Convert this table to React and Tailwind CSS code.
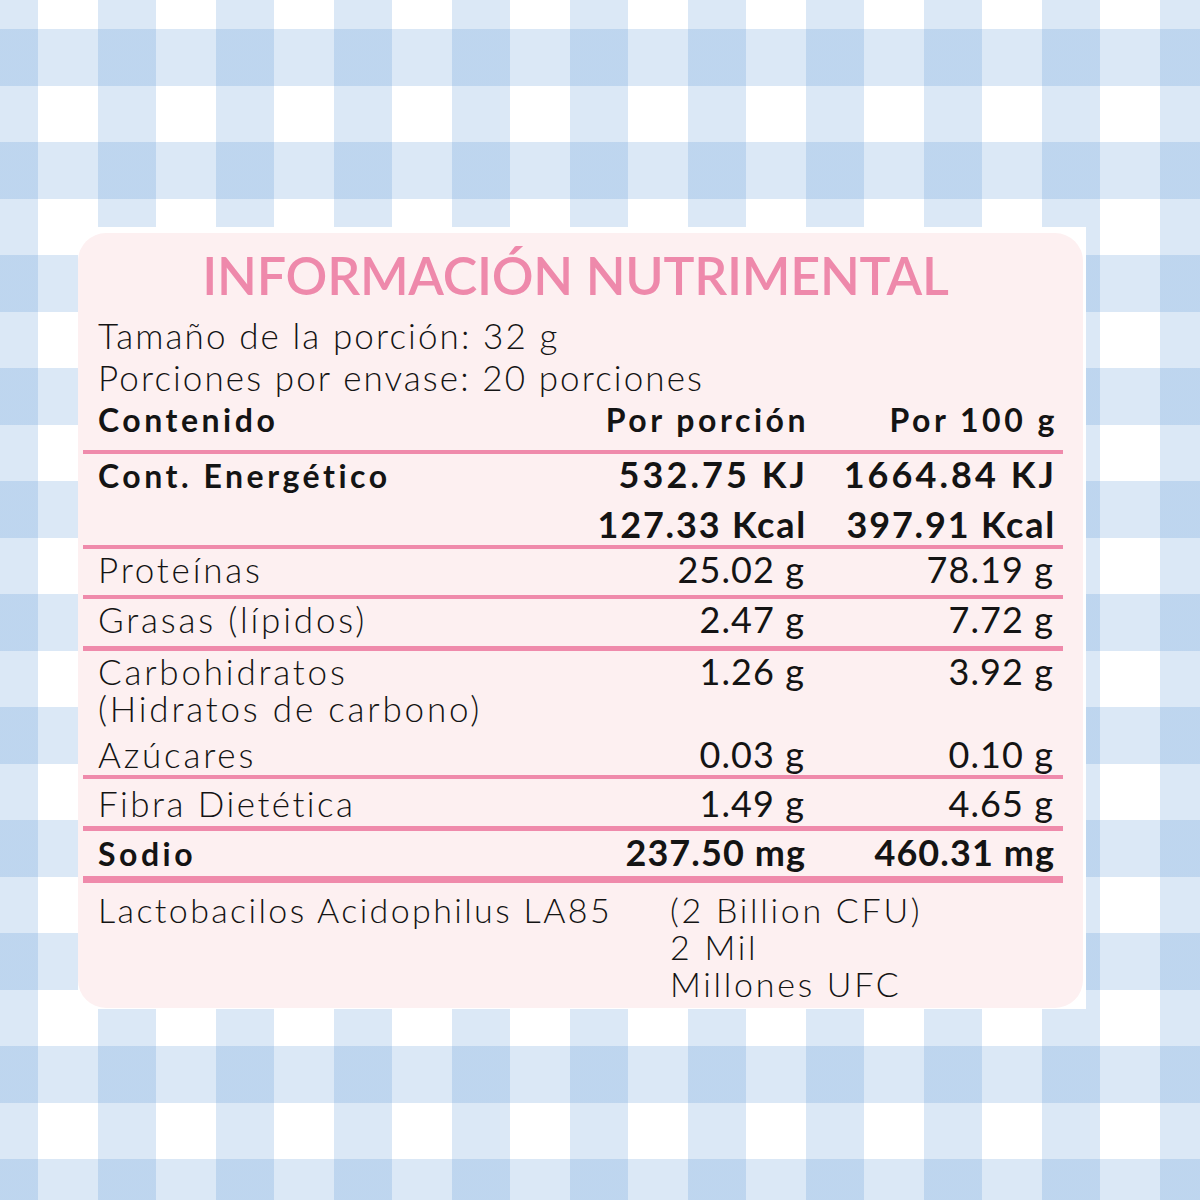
const pink = "bg-[#ef8aab]";

const rows = [
  { label: "Proteínas", a: "25.02 g", b: "78.19 g", h: "h-[46px]" },
  { label: "Grasas (lípidos)", a: "2.47 g", b: "7.72 g", h: "h-[47px]" },
];

const Line = ({ h = "h-[4px]" }) => <div className={`${h} ${pink}`} />;

const Values = ({ a, b, bold, track = "tracking-[0.03em]" }) => (
  <>
    <div className={`w-[240px] text-right text-[36px] ${track} ${bold ? "font-bold" : "font-normal"}`}>{a}</div>
    <div className={`w-[249px] text-right text-[36px] ${track} ${bold ? "font-bold" : "font-normal"}`}>{b}</div>
  </>
);

export default function App() {
  return (
    <div className="h-[1200px] w-[1200px] overflow-hidden bg-white bg-[image:repeating-linear-gradient(90deg,rgba(75,140,210,0.2)_0px_38px,transparent_38px_98px,rgba(75,140,210,0.2)_98px_118px),repeating-linear-gradient(180deg,transparent_0px_29px,rgba(75,140,210,0.2)_29px_86px,transparent_86px_113px)] pl-[78px] pt-[227px] font-['Lato','Liberation_Sans',sans-serif] text-[#141414]">
      <div className="h-[782px] w-[1008px] bg-white pb-[1px] pr-[3px] pt-[6px]">
        <div className="h-full rounded-[28px] bg-[#fdf0f1] pt-[15px]">
          <h1 className="pr-[10px] text-center text-[52px] font-semibold leading-[54px] tracking-[-0.005em] text-[#ee89ab]">
            INFORMACIÓN NUTRIMENTAL
          </h1>

          <div className="mt-[12px] pl-[20px] text-[35px] font-light leading-[42px] tracking-[0.06em]">
            <p>Tamaño de la porción: 32 g</p>
            <p>Porciones por envase: 20 porciones</p>
          </div>

          <div className="ml-[5px] mr-[20px]">
            {/* encabezado */}
            <div className="flex h-[52px] items-baseline pl-[15px] pr-[5px] pt-[1px] text-[32px] font-bold leading-[42px] tracking-[0.11em]">
              <div className="flex-1">Contenido</div>
              <div className="w-[260px] text-right">Por porción</div>
              <div className="w-[249px] text-right">Por 100 g</div>
            </div>
            <Line />

            <div className="h-[91px] pl-[15px] pr-[6px] leading-[40px]">
              <div className="flex items-baseline">
                <div className="flex-1 text-[32px] font-bold tracking-[0.11em]">Cont. Energético</div>
                <Values a="532.75 KJ" b="1664.84 KJ" bold track="tracking-[0.085em]" />
              </div>
              <div className="mt-[8px] flex items-baseline pr-[1px]">
                <div className="flex-1" />
                <Values a="127.33 Kcal" b="397.91 Kcal" bold track="tracking-[0.05em]" />
              </div>
            </div>
            <Line />

            {rows.map((r, i) => (
              <div key={r.label}>
                <div className={`flex items-baseline ${r.h} pl-[15px] pr-[9px] leading-[40px]`}>
                  <div className="flex-1 text-[35px] font-light tracking-[0.08em]">{r.label}</div>
                  <Values a={r.a} b={r.b} />
                </div>
                <Line h={i === 1 ? "h-[5px]" : "h-[4px]"} />
              </div>
            ))}

            <div className="h-[124px] pl-[15px] pr-[9px]">
              <div className="flex h-[40px] items-baseline leading-[40px]">
                <div className="flex-1 text-[35px] font-light tracking-[0.08em]">Carbohidratos</div>
                <Values a="1.26 g" b="3.92 g" />
              </div>
              <div className="h-[35px] text-[35px] font-light leading-[35px] tracking-[0.08em]">(Hidratos de carbono)</div>
              <div className="mt-[8px] flex h-[40px] items-baseline leading-[40px]">
                <div className="flex-1 text-[35px] font-light tracking-[0.08em]">Azúcares</div>
                <Values a="0.03 g" b="0.10 g" />
              </div>
            </div>
            <Line />

            <div className="flex h-[47px] items-baseline pl-[15px] pr-[9px] pt-[4px] leading-[40px]">
              <div className="flex-1 text-[35px] font-light tracking-[0.07em]">Fibra Dietética</div>
              <Values a="1.49 g" b="4.65 g" />
            </div>
            <Line h="h-[5px]" />

            <div className="flex h-[45px] items-baseline pl-[15px] pr-[8px] pt-[1px] leading-[40px]">
              <div className="flex-1 text-[32px] font-bold tracking-[0.11em]">Sodio</div>
              <Values a="237.50 mg" b="460.31 mg" bold />
            </div>
            <Line h="h-[7px]" />

            <div className="flex pl-[15px] pt-[8px] text-[34px] font-light leading-[37px] tracking-[0.07em]">
              <div className="w-[572px]">Lactobacilos Acidophilus LA85</div>
              <div className="tracking-[0.08em]">
                <p>(2 Billion CFU)</p>
                <p>2 Mil</p>
                <p>Millones UFC</p>
              </div>
            </div>
          </div>
        </div>
      </div>
    </div>
  );
}
